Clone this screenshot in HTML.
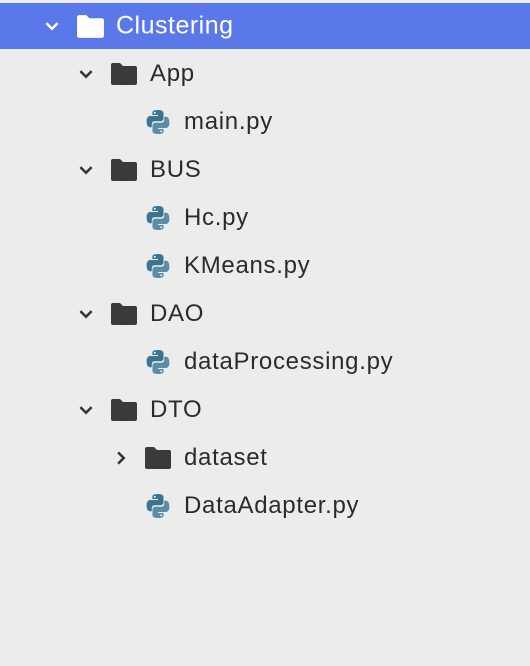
<html><head><style>
body{margin:0;width:530px;height:666px;background:#ececec;font-family:"Liberation Sans",sans-serif;overflow:hidden;position:relative}
.hl{position:absolute;left:0;top:3px;width:530px;height:46px;background:#5a78e8}
.r{position:absolute;height:48px;display:flex;align-items:center;font-size:24px;letter-spacing:0.7px;color:#2b2b2b}
.r svg{position:absolute}
.t{position:absolute;white-space:nowrap;top:50%;transform:translateY(-50%)}
</style></head><body>
<div class="hl"></div>
<svg width="0" height="0" style="position:absolute"><defs>
<symbol id="f" viewBox="0 0 28 24"><path d="M1 3a2 2 0 0 1 2-2h7l3 3h12a2 2 0 0 1 2 2v15a2 2 0 0 1-2 2H3a2 2 0 0 1-2-2z"/></symbol>
<symbol id="c" viewBox="0 0 12 8"><path d="M1 1l5 5 5-5" fill="none" stroke-width="2.2"/></symbol>
<symbol id="cr" viewBox="0 0 8 12"><path d="M1 1l5 5-5 5" fill="none" stroke-width="2.2"/></symbol>
<symbol id="p" viewBox="0 0 26 26"><path fill="#3d7391" d="M12.8 1C7 1 7.4 3.5 7.4 3.5V6h5.5v1H5.3S1.6 6.6 1.6 12.5s3.2 5.7 3.2 5.7h2v-2.8s-.1-3.2 3.2-3.2h5.4s3.1 0 3.1-3V4.1S19 1 12.8 1zM9.8 2.8a1 1 0 1 1 0 2 1 1 0 0 1 0-2z"/><path fill="#5b8ca8" d="M13.2 25c5.8 0 5.4-2.5 5.4-2.5V20h-5.5v-1h7.6s3.7.4 3.7-5.5-3.2-5.7-3.2-5.7h-2v2.8s.1 3.2-3.2 3.2H10.6s-3.1 0-3.1 3v5.1S7 25 13.2 25zm3-1.8a1 1 0 1 1 0-2 1 1 0 0 1 0 2z"/></symbol>
</defs></svg>

<div class="r" style="top:2px;left:0;width:530px;color:#fff">
<svg style="left:45px;top:20px" width="14" height="9" stroke="#fff"><use href="#c"/></svg>
<svg style="left:76px;top:12px" width="29" height="25" fill="#fff"><use href="#f"/></svg>
<span class="t" style="left:116px;font-size:25px;letter-spacing:0.5px">Clustering</span></div>

<div class="r" style="top:50px;left:0;width:530px">
<svg style="left:79px;top:20px" width="14" height="9" stroke="#333"><use href="#c"/></svg>
<svg style="left:110px;top:12px" width="28" height="24" fill="#3a3a3a"><use href="#f"/></svg>
<span class="t" style="left:150px">App</span></div>
<div class="r" style="top:98px;left:0;width:530px">
<svg style="left:145px;top:11px" width="26" height="26"><use href="#p"/></svg>
<span class="t" style="left:184px">main.py</span></div>

<div class="r" style="top:146px;left:0;width:530px">
<svg style="left:79px;top:20px" width="14" height="9" stroke="#333"><use href="#c"/></svg>
<svg style="left:110px;top:12px" width="28" height="24" fill="#3a3a3a"><use href="#f"/></svg>
<span class="t" style="left:150px">BUS</span></div>
<div class="r" style="top:194px;left:0;width:530px">
<svg style="left:145px;top:11px" width="26" height="26"><use href="#p"/></svg>
<span class="t" style="left:184px">Hc.py</span></div>
<div class="r" style="top:242px;left:0;width:530px">
<svg style="left:145px;top:11px" width="26" height="26"><use href="#p"/></svg>
<span class="t" style="left:184px">KMeans.py</span></div>

<div class="r" style="top:290px;left:0;width:530px">
<svg style="left:79px;top:20px" width="14" height="9" stroke="#333"><use href="#c"/></svg>
<svg style="left:110px;top:12px" width="28" height="24" fill="#3a3a3a"><use href="#f"/></svg>
<span class="t" style="left:150px">DAO</span></div>
<div class="r" style="top:338px;left:0;width:530px">
<svg style="left:145px;top:11px" width="26" height="26"><use href="#p"/></svg>
<span class="t" style="left:184px">dataProcessing.py</span></div>

<div class="r" style="top:386px;left:0;width:530px">
<svg style="left:79px;top:20px" width="14" height="9" stroke="#333"><use href="#c"/></svg>
<svg style="left:110px;top:12px" width="28" height="24" fill="#3a3a3a"><use href="#f"/></svg>
<span class="t" style="left:150px">DTO</span></div>
<div class="r" style="top:434px;left:0;width:530px">
<svg style="left:117px;top:17px" width="9" height="14" stroke="#333"><use href="#cr"/></svg>
<svg style="left:144px;top:12px" width="28" height="24" fill="#3a3a3a"><use href="#f"/></svg>
<span class="t" style="left:184px">dataset</span></div>
<div class="r" style="top:482px;left:0;width:530px">
<svg style="left:145px;top:11px" width="26" height="26"><use href="#p"/></svg>
<span class="t" style="left:184px">DataAdapter.py</span></div>
</body></html>
